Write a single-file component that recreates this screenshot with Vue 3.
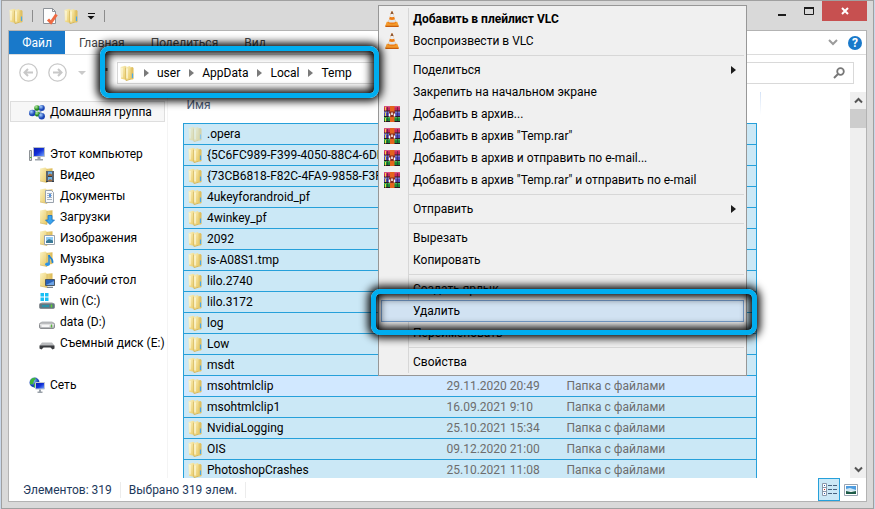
<script setup>
const tabs = ['Главная', 'Поделиться', 'Вид']
const crumbs = ['user', 'AppData', 'Local', 'Temp']

const places = [
  { name: 'Видео', icon: 'video' },
  { name: 'Документы', icon: 'docs' },
  { name: 'Загрузки', icon: 'downloads' },
  { name: 'Изображения', icon: 'pictures' },
  { name: 'Музыка', icon: 'music' },
  { name: 'Рабочий стол', icon: 'desktop' },
  { name: 'win (C:)', icon: 'drive-win' },
  { name: 'data (D:)', icon: 'drive' },
  { name: 'Съемный диск (E:)', icon: 'removable' },
]

const type = 'Папка с файлами'
const files = [
  { name: '.opera', hidden: true },
  { name: '{5C6FC989-F399-4050-88C4-6DB' },
  { name: '{73CB6818-F82C-4FA9-9858-F3F2' },
  { name: '4ukeyforandroid_pf' },
  { name: '4winkey_pf' },
  { name: '2092' },
  { name: 'is-A08S1.tmp' },
  { name: 'lilo.2740' },
  { name: 'lilo.3172' },
  { name: 'log' },
  { name: 'Low' },
  { name: 'msdt' },
  { name: 'msohtmlclip', date: '29.11.2020 20:49', type, focused: true },
  { name: 'msohtmlclip1', date: '16.09.2021 9:10', type },
  { name: 'NvidiaLogging', date: '25.10.2021 15:34', type },
  { name: 'OIS', date: '09.12.2020 21:00', type },
  { name: 'PhotoshopCrashes', date: '25.10.2021 11:08', type },
]

const menuGroups = [
  [
    { label: 'Добавить в плейлист VLC', icon: 'vlc', bold: true },
    { label: 'Воспроизвести в VLC', icon: 'vlc' },
  ],
  [
    { label: 'Поделиться', sub: true },
    { label: 'Закрепить на начальном экране' },
    { label: 'Добавить в архив...', icon: 'rar' },
    { label: 'Добавить в архив "Temp.rar"', icon: 'rar' },
    { label: 'Добавить в архив и отправить по e-mail...', icon: 'rar' },
    { label: 'Добавить в архив "Temp.rar" и отправить по e-mail', icon: 'rar' },
  ],
  [{ label: 'Отправить', sub: true }],
  [{ label: 'Вырезать' }, { label: 'Копировать' }],
  [{ label: 'Создать ярлык' }, { label: 'Удалить', active: true }, { label: 'Переименовать' }],
  [{ label: 'Свойства' }],
]
</script>

<template>
  <svg class="defs" aria-hidden="true">
    <defs>
      <linearGradient id="gold" x1="0" x2="1" y1="0" y2="1">
        <stop offset="0" stop-color="#fbf3c4" />
        <stop offset="1" stop-color="#e8c862" />
      </linearGradient>
      <linearGradient id="goldDark" x1="0" x2="1">
        <stop offset="0" stop-color="#f3e39a" />
        <stop offset="1" stop-color="#dcb956" />
      </linearGradient>
      <linearGradient id="steel" x1="0" x2="0" y1="0" y2="1">
        <stop offset="0" stop-color="#f4f4f4" />
        <stop offset="1" stop-color="#a8abae" />
      </linearGradient>
      <radialGradient id="ballBlue" cx=".35" cy=".3">
        <stop offset="0" stop-color="#a9d3ff" />
        <stop offset="1" stop-color="#1b46b5" />
      </radialGradient>
      <radialGradient id="ballGreen" cx=".35" cy=".3">
        <stop offset="0" stop-color="#b7f0a0" />
        <stop offset="1" stop-color="#22861f" />
      </radialGradient>
      <linearGradient id="screen" x1="0" x2="1" y1="0" y2="1">
        <stop offset="0" stop-color="#0a1bb0" />
        <stop offset=".5" stop-color="#1130d8" />
        <stop offset="1" stop-color="#7fb0ff" />
      </linearGradient>

      <symbol id="folder" viewBox="0 0 16 16">
        <path d="M8 3l5.500-1 1 1v11l-1 .6L8 15z" fill="url(#goldDark)" />
        <path d="M1.500 2L6 .8l1.500.7V15L2 13.800z" fill="url(#gold)" />
        <path d="M6.500 2.600L10.500 1l1 .7v12.500L7 15.800z" fill="url(#gold)" />
        <path d="M6.500 2.600L7 15.800l4.500-1.600" fill="none" stroke="#c9a748" stroke-width=".6" />
        <path d="M8 3.500v10" stroke="#fffbe0" stroke-width="1.200" />
        <path d="M3 3v9.500" stroke="#fffce8" stroke-width="1" />
        <path d="M13.500 8.500v4.500" stroke="#4aa8e8" stroke-width="1.200" />
      </symbol>

      <symbol id="folder-back" viewBox="0 0 16 16">
        <path d="M5 2l8.500-.8V13L5 14z" fill="url(#goldDark)" />
        <path d="M1 1.500L6.500.5 8 2v13.500L1 14z" fill="url(#gold)" />
        <path d="M8 2v13.500L1 14" fill="none" stroke="#cfae55" stroke-width=".6" />
      </symbol>
      <symbol id="video" viewBox="0 0 16 16">
        <use href="#folder-back" />
        <path d="M7 4h8v11H7z" fill="#333b44" />
        <path d="M9 4.500h4v4.500H9zM9 10h4v4.500H9z" fill="#6fb2e6" />
        <path d="M9 8l2-1.500 2 1V9H9zM9 13.500l2-1.500 2 1v1.500H9z" fill="#a26a3a" />
        <path d="M8 4.500v10M14 4.500v10" stroke="#d8dde2" stroke-dasharray="1 1" />
      </symbol>
      <symbol id="docs" viewBox="0 0 16 16">
        <use href="#folder-back" />
        <path d="M6.500 2.500h6l2 2v10h-8z" fill="#f7f9fb" stroke="#9aa3ad" />
        <path d="M8 5.500h5M8 7.500h5M8 9.500h5M8 11.500h5" stroke="#a9b4c2" />
        <path d="M10 6h2v3h-2z" fill="#5794dd" />
      </symbol>
      <symbol id="downloads" viewBox="0 0 16 16">
        <use href="#folder-back" />
        <path d="M9 6.500h4V11h2.500L11 15.500 6.500 11H9z" fill="#39a4ee" stroke="#1c72c0" stroke-width=".8" />
      </symbol>
      <symbol id="pictures" viewBox="0 0 16 16">
        <use href="#folder-back" />
        <path d="M5.500 5.500h10v9h-10z" fill="#fff" stroke="#9aa3ad" />
        <path d="M7 7h7v3.500H7z" fill="#8ecbf5" />
        <path d="M7 11l3-2 4 1.500V13H7z" fill="#3a7a98" />
      </symbol>
      <symbol id="music" viewBox="0 0 16 16">
        <use href="#folder-back" />
        <path d="M10 4c0 3 4.500 3 3.500 8" fill="none" stroke="#1f83d6" stroke-width="1.600" />
        <path d="M10 4v9" stroke="#1f83d6" stroke-width="1.400" />
        <ellipse cx="8.500" cy="13.300" rx="2.400" ry="1.800" fill="#2b93e6" />
      </symbol>
      <symbol id="desktop" viewBox="0 0 16 16">
        <use href="#folder-back" />
        <path d="M6.500 7.500h9v6h-9z" fill="#2a62b8" stroke="#4a5866" />
        <path d="M7 13l8-4v4z" fill="#6fa5e6" />
        <path d="M8 15.300h6" stroke="#5d6a76" />
      </symbol>
      <symbol id="drive-win" viewBox="0 0 16 16">
        <path d="M1.500 0h3.500v3.500H1.500zM6 0h3.500v3.500H6zM1.500 4.500h3.500V8H1.500zM6 4.500h3.500V8H6z" fill="#18c0f5" />
        <path d="M3 9h10l2.500 2H.5z" fill="#c9cccf" />
        <rect x=".5" y="10.500" width="15" height="5" rx="1.200" fill="#5f7884" stroke="#8a8f94" />
        <path d="M3 13h7" stroke="#2b91a8" stroke-width="2" />
        <path d="M12.500 11.500v3" stroke="#62d42c" stroke-width="1.400" />
      </symbol>
      <symbol id="drive" viewBox="0 0 16 16">
        <path d="M3 7h10l2.500 3H.5z" fill="#dcdee0" />
        <rect x=".5" y="9" width="15" height="5.500" rx="1.400" fill="url(#steel)" stroke="#8a8c8f" />
        <path d="M2.500 12h8" stroke="#f6f6f6" stroke-width="2" />
        <path d="M12.500 10.500v3" stroke="#58b83a" stroke-width="1.200" />
      </symbol>
      <symbol id="removable" viewBox="0 0 16 16">
        <path d="M3 7.500h10l2.500 3H.5z" fill="#b9bbbd" />
        <path d="M.5 10.500h15v3l-2 1-2-2h-7l-2 2-2-1z" fill="#3a3c3f" />
        <path d="M1 10.500h14" stroke="#77797c" />
      </symbol>

      <symbol id="homegroup" viewBox="0 0 16 16">
        <path d="M4 8l7-4 1 8z" fill="none" stroke="#8fa6c8" stroke-width="2" />
        <circle cx="8" cy="4" r="2.800" fill="url(#ballGreen)" />
        <circle cx="12.800" cy="4" r="3" fill="url(#ballBlue)" />
        <circle cx="3.300" cy="9" r="3.300" fill="url(#ballBlue)" />
        <circle cx="8.500" cy="10" r="2.600" fill="url(#ballGreen)" />
        <circle cx="12.700" cy="12.300" r="3.200" fill="url(#ballBlue)" />
      </symbol>
      <symbol id="computer" viewBox="0 0 16 16">
        <path d="M.5 4.500h2v10h-2z" fill="#d7dadd" stroke="#8d9296" />
        <path d="M1 11.500h1.500" stroke="#46b82b" />
        <path d="M4.500 1.500h11v9h-11z" fill="url(#screen)" stroke="#b8bec6" />
        <path d="M8.500 11h3v2h2.500v1.500H6V13h2.500z" fill="#9aa1a9" />
      </symbol>
      <symbol id="network" viewBox="0 0 16 16">
        <circle cx="5.500" cy="5.500" r="5" fill="url(#ballBlue)" />
        <path d="M1 4c1-3 4-3.500 6-3l-2 3-1 3-3 .5zM5 7l3-2v5l-3 .5z" fill="#3fb53a" />
        <path d="M6.500 5.500h9v6.500h-9z" fill="url(#screen)" stroke="#c3c9d2" />
        <path d="M10 12.500h2v2h1.500V16H8.500v-1.500H10z" fill="#9aa1a9" />
      </symbol>

      <symbol id="vlc" viewBox="0 0 16 16">
        <path d="M2.800 10.800h10.400l1.600 4.200c0 .7-.6.9-1.300.9h-11c-.7 0-1.300-.2-1.300-.9z" fill="#f39a2c" />
        <path d="M1.200 14.700h13.600l-.5 1.200H1.700z" fill="#c85c0c" />
        <path d="M7.300.4h1.400L12 12c-2 1.500-6 1.500-8 0z" fill="#ef7d14" />
        <path d="M6.600 3h2.800l.8 2.700c-1.200.6-3.200.6-4.400 0z" fill="#eceff1" />
        <path d="M5 8.200c1.800.9 4.200.9 6 0l.8 2.500c-2 1.200-5.600 1.200-7.600 0z" fill="#dfe3e6" />
        <path d="M7.300.4h1.400l.7 2.600H6.600z" fill="#8c5a3a" />
      </symbol>
      <symbol id="rar" viewBox="0 0 16 16">
        <path d="M0 0h16v5H0z" fill="#c4265c" />
        <path d="M0 5.500h16v5H0z" fill="#4a48b4" />
        <path d="M0 11h16v5H0z" fill="#168a34" />
        <path d="M0 .8h16" stroke="#e4668c" />
        <path d="M0 6.300h16" stroke="#7c7ad6" />
        <path d="M0 11.700h16" stroke="#50bb5a" />
        <path d="M0 5h16M0 10.500h16M0 15.500h16" stroke="#2a1820" />
        <path d="M1.500 1v3.500M1.500 6.500V10M1.500 12v3.500" stroke="#f0d840" />
        <path d="M3.500 1v14M13.500 1v14" stroke="#2b1a3a" stroke-opacity=".5" />
        <path d="M6 0h4.500v16H6z" fill="#e4641c" />
        <path d="M5 5.500h6V11H5z" fill="#8a2a1c" />
        <path d="M5.500 10.500v-3M8 9V6.500M10.500 10.500v-3" stroke="#fff" stroke-width="1.500" />
      </symbol>
      <symbol id="properties" viewBox="0 0 16 18">
        <path d="M1.500 1.500h9l3 3v12h-12z" fill="#fdfdfd" stroke="#8e9399" />
        <path d="M10.500 1.500v3h3" fill="none" stroke="#8e9399" />
        <path d="M6 12.500l3 3 5.500-8" fill="none" stroke="#ee6a42" stroke-width="3" />
      </symbol>
    </defs>
  </svg>

  <div class="window">
    <header class="titlebar">
      <svg class="ico"><use href="#folder" /></svg>
      <i class="bar"></i>
      <button class="quick" aria-label="Свойства"><svg class="tall"><use href="#properties" /></svg></button>
      <button class="quick" aria-label="Новая папка"><svg class="ico"><use href="#folder" /></svg></button>
      <button class="quick more" aria-label="Настройка панели">
        <svg width="8" height="8" viewBox="0 0 8 8"><path d="M1 1.500h7" stroke="#111" /><path d="M.5 4h7L4 7.500z" fill="#111" /></svg>
      </button>
      <i class="bar"></i>
      <div class="controls">
        <button aria-label="Свернуть"><svg width="10" height="10"><path d="M1 9h8" stroke="#1c1c1c" stroke-width="2" /></svg></button>
        <button aria-label="Развернуть"><svg width="10" height="10"><path d="M.5 2.500h9v6h-9z" fill="none" stroke="#1c1c1c" /><path d="M0 2h10" stroke="#1c1c1c" stroke-width="2" /></svg></button>
        <button class="close" aria-label="Закрыть"><svg width="8" height="8"><path d="M1 1l6 6M7 1L1 7" stroke="#fff" stroke-width="2" /></svg></button>
      </div>
    </header>

    <div class="client">
      <nav class="tabs">
        <button class="file">Файл</button>
        <button v-for="t in tabs" :key="t" class="tab">{{ t }}</button>
        <button class="expand" aria-label="Развернуть ленту"><svg width="10" height="7"><path d="M1 1l4 4 4-4" fill="none" stroke="#9b9b9b" stroke-width="2" /></svg></button>
        <button class="help" aria-label="Справка">?</button>
      </nav>

      <div class="navbar">
        <button class="round" aria-label="Назад"><svg width="19" height="19"><circle cx="9.500" cy="9.500" r="8.700" fill="none" stroke="#c8c8c8" stroke-width="1.300" /><path d="M14 9.500H6M9 6L5.500 9.500 9 13" fill="none" stroke="#c8c8c8" stroke-width="2" /></svg></button>
        <button class="round" aria-label="Вперед"><svg width="19" height="19"><circle cx="9.500" cy="9.500" r="8.700" fill="none" stroke="#c8c8c8" stroke-width="1.300" /><path d="M5 9.500h8M10 6l3.500 3.500L10 13" fill="none" stroke="#c8c8c8" stroke-width="2" /></svg></button>
        <button class="recent" aria-label="Последние"><svg width="8" height="4"><path d="M0 0h8L4 4z" fill="#cacaca" /></svg></button>
        <button class="up" aria-label="Вверх"><svg width="11" height="11"><path d="M4.500 1v3" stroke="#555" stroke-width="2" /></svg></button>
        <div class="address">
          <svg class="ico"><use href="#folder" /></svg>
          <template v-for="c in crumbs" :key="c">
            <svg class="chev" width="5" height="8"><path d="M0 0l5 4-5 4z" fill="#7a7a7a" /></svg>
            <a href="#">{{ c }}</a>
          </template>
        </div>
        <div class="search">
          <input type="text" aria-label="Поиск" />
          <svg width="12" height="12"><circle cx="7.500" cy="4.500" r="3.300" fill="none" stroke="#777" stroke-width="1.800" /><path d="M5 7L1 11" stroke="#777" stroke-width="2" /></svg>
        </div>
      </div>

      <div class="body">
        <aside class="tree">
          <a href="#" class="node root hot"><svg class="ico"><use href="#homegroup" /></svg>Домашняя группа</a>
          <a href="#" class="node root gap"><svg class="ico"><use href="#computer" /></svg>Этот компьютер</a>
          <a v-for="p in places" :key="p.name" href="#" class="node child"><svg class="ico"><use :href="'#' + p.icon" /></svg>{{ p.name }}</a>
          <a href="#" class="node root gap"><svg class="ico"><use href="#network" /></svg>Сеть</a>
        </aside>

        <main class="list">
          <table>
            <colgroup><col class="c-name" /><col class="c-date" /><col /></colgroup>
            <thead><tr><th>Имя</th><th></th><th></th></tr></thead>
            <tbody>
              <tr v-for="f in files" :key="f.name" :class="{ focused: f.focused, dim: f.hidden }">
                <td><span class="cell"><svg class="ico"><use href="#folder" /></svg>{{ f.name }}</span></td>
                <td>{{ f.date }}</td>
                <td>{{ f.type }}</td>
              </tr>
            </tbody>
          </table>
          <i class="colend"></i>
        </main>

        <div class="scroll">
          <button aria-label="Прокрутить вверх"><svg width="9" height="7"><path d="M1 5.500l3.500-3.500L8 5.500" fill="none" stroke="#555" stroke-width="2" /></svg></button>
          <div class="thumb"></div>
          <button class="down" aria-label="Прокрутить вниз"><svg width="9" height="7"><path d="M1 1.500l3.500 3.500L8 1.500" fill="none" stroke="#555" stroke-width="2" /></svg></button>
        </div>
      </div>

      <footer class="status">
        <span>Элементов: 319</span>
        <span>Выбрано 319 элем.</span>
        <div class="views">
          <button class="on" aria-label="Таблица">
            <svg width="15" height="13"><path d="M.5 0.500h4v12h-4zM.5 4.500h4M.5 8.500h4" fill="#fff" stroke="#8a97a8" /><path d="M2 2h1v1H2zM2 10h1v1H2z" fill="#2a5fb8" /><path d="M2 6h1v1H2z" fill="#c22" /><path d="M6 2.500h4M11 2.500h4M6 6.500h4M11 6.500h4M6 10.500h4M11 10.500h4" stroke="#46617e" /></svg>
          </button>
          <button aria-label="Эскизы">
            <svg width="14" height="12"><path d="M.5.5h13v11H.5z" fill="#fff" stroke="#9aa5b2" /><path d="M2 2h10v4H2z" fill="#4f9de0" /><path d="M2 5l4-1 6 2v1H2z" fill="#cfe8f5" /><path d="M2 7l5 1 5-1v3H2z" fill="#1d5b48" /></svg>
          </button>
        </div>
      </footer>
    </div>

    <div class="menu" role="menu">
      <div v-for="(g, i) in menuGroups" :key="i" class="group">
        <button v-for="m in g" :key="m.label" role="menuitem" class="item" :class="{ bold: m.bold, active: m.active }">
          <span class="slot"><svg v-if="m.icon" class="ico"><use :href="'#' + m.icon" /></svg></span>
          <span>{{ m.label }}</span>
          <svg v-if="m.sub" class="arrow" width="5" height="8"><path d="M0 0l5 4-5 4z" fill="#1c1c1c" /></svg>
          <i v-if="m.active" class="ring ring-item"></i>
        </button>
      </div>
    </div>
    <i class="ring ring-address"></i>
  </div>
</template>

<style>
body {
  margin: 0;
  background: #c9d8ea;
}
</style>

<style scoped>
* {
  box-sizing: border-box;
}
.defs {
  position: absolute;
  width: 0;
  height: 0;
}
button {
  padding: 0;
  border: 0;
  background: none;
  font: inherit;
  color: inherit;
}
a {
  color: inherit;
  text-decoration: none;
}
svg {
  display: block;
  flex: none;
}
.ico {
  width: 16px;
  height: 16px;
}
.window {
  position: relative;
  display: flex;
  flex-direction: column;
  height: 100vh;
  margin: 0 1px;
  padding: 0 6px 6px;
  border: 1px solid #a0a0a0;
  background: #d9d9d9;
  font: 12px/16px Roboto, "Open Sans", sans-serif;
  color: #000;
  overflow: hidden;
}
.titlebar {
  display: flex;
  align-items: center;
  height: 29px;
  flex: none;
  gap: 8px;
}
.bar {
  width: 1px;
  height: 12px;
  background: #8c8c8c;
}
.tall {
  width: 16px;
  height: 18px;
}
.quick {
  margin-left: 2px;
}
.quick:first-of-type {
  margin-left: 1px;
}
.quick + .quick {
  margin-left: -3px;
}
.quick + .more {
  margin-left: 0;
}
.more + .bar {
  margin-left: 1px;
}
.controls {
  display: flex;
  align-self: flex-start;
  margin-left: auto;
}
.controls button {
  display: flex;
  align-items: center;
  justify-content: center;
  width: 27px;
  height: 20px;
}
.controls .close {
  width: 45px;
  background: #c75050;
}
.client {
  display: flex;
  flex-direction: column;
  flex: 1;
  min-height: 0;
  border: 1px solid #b3b3b3;
  background: #fff;
}
.tabs {
  display: flex;
  align-items: center;
  flex: none;
  height: 24px;
  border-bottom: 1px solid #dcdcdc;
  color: #444;
}
.file {
  width: 56px;
  align-self: stretch;
  background: #1979ca;
  color: #fff;
}
.tab {
  margin-left: 14px;
  margin-right: 12px;
}
.expand {
  margin-left: auto;
}
.help {
  width: 14px;
  height: 14px;
  margin: 0 4px 0 10px;
  border-radius: 50%;
  background: #1979ca;
  color: #fff;
  font-weight: 700;
  line-height: 14px;
}
.navbar {
  display: flex;
  align-items: center;
  flex: none;
  height: 37px;
  padding: 0 12px 2px 10px;
}
.round + .round {
  margin-left: 10px;
}
.recent {
  margin-left: 11px;
}
.up {
  margin: 0 4px 0 16px;
}
.address,
.search {
  display: flex;
  align-items: center;
  height: 22px;
  border: 1px solid #d9d9d9;
}
.address {
  flex: 3;
  padding-left: 1px;
}
.address a {
  margin: 0 0 0 8px;
}
.chev {
  margin-left: 9px;
}
.search {
  flex: 1;
  margin-left: 8px;
  padding-right: 8px;
}
.search input {
  flex: 1;
  min-width: 0;
  border: 0;
  outline: 0;
  background: none;
  font: inherit;
}
.body {
  display: flex;
  flex: 1;
  min-height: 0;
}
.tree {
  flex: none;
  width: 159px;
  padding: 9px 2px 0 1px;
  border-right: 1px solid #f4f4f4;
}
.node {
  display: flex;
  align-items: center;
  height: 21px;
  gap: 5px;
  border: 1px solid transparent;
  white-space: nowrap;
}
.root {
  padding-left: 18px;
}
.child {
  padding-left: 28px;
}
.hot {
  border-color: #dedede;
  background: #f7f7f7;
}
.gap {
  margin-top: 21px;
}
.list {
  display: flex;
  flex: 1;
  min-width: 0;
  padding-left: 15px;
  overflow: hidden;
}
table {
  width: calc(100% - 93px);
  height: max-content;
  border-collapse: collapse;
  table-layout: fixed;
}
.c-name {
  width: 258px;
}
.c-date {
  width: 120px;
}
th {
  height: 31px;
  padding: 0 3px 4px;
  font-weight: 400;
  text-align: left;
  color: #4c607a;
}
tbody tr {
  height: 21px;
  border: 1px solid #26a0da;
  background: #cbe8f6;
}
tbody .focused {
  background: #d1e8ff;
}
td {
  padding: 0 5px;
  color: #6d6d6d;
  white-space: nowrap;
  line-height: 16px;
}
td:first-child {
  padding-left: 3px;
  color: #000;
}
.cell {
  display: flex;
  align-items: center;
  gap: 4px;
}
.dim .ico {
  opacity: 0.5;
}
.colend {
  width: 1px;
  height: 23px;
  margin-left: 3px;
  background: linear-gradient(#d5e3f7, #fff);
}
.scroll {
  display: flex;
  flex-direction: column;
  flex: none;
  width: 16px;
  background: #efefef;
}
.scroll button {
  display: flex;
  align-items: center;
  justify-content: center;
  height: 17px;
}
.thumb {
  height: 19px;
  background: #cdcdcd;
}
.scroll .down {
  margin-top: auto;
}
.status {
  display: flex;
  align-items: center;
  flex: none;
  height: 23px;
  padding-left: 14px;
  color: #1e395b;
}
.status span {
  padding-right: 8px;
  margin-right: 8px;
  border-right: 1px solid #ececec;
}
.views {
  display: flex;
  margin-left: auto;
  padding-right: 4px;
}
.views button {
  display: flex;
  align-items: center;
  justify-content: center;
  width: 22px;
  height: 23px;
}
.views .on {
  border: 1px solid #26a0da;
  background: #cbe8f6;
}
.menu {
  position: absolute;
  z-index: 1;
  top: 4px;
  left: 376px;
  width: 369px;
  padding: 2px;
  border: 1px solid #979797;
  background: linear-gradient(#d7d7d7, #d7d7d7) 29px 2px / 1px calc(100% - 4px) no-repeat #f0f0f0;
}
.group + .group::before {
  content: "";
  display: block;
  height: 7px;
  margin-left: 27px;
  background: linear-gradient(#d7d7d7, #d7d7d7) 0 3px / 100% 1px no-repeat;
}
.item {
  position: relative;
  display: flex;
  align-items: center;
  width: 100%;
  height: 22px;
  padding-right: 7px;
  border: 1px solid transparent;
  text-align: left;
  white-space: nowrap;
}
.slot {
  width: 31px;
  padding-left: 2px;
}
.bold {
  font-weight: 700;
}
.active {
  z-index: 1;
  border-color: #78a0d0;
  background: #d1e2f2;
}
.arrow {
  margin-left: auto;
}
.ring {
  position: absolute;
  border: 5px solid #00adef;
  border-radius: 9px;
  box-shadow: 0 0 9px 3px #000, inset 0 0 9px 3px #000;
  pointer-events: none;
}
.ring-item {
  inset: -12px -14px -14px -11px;
}
.ring-address {
  z-index: 2;
  top: 45px;
  left: 98px;
  width: 279px;
  height: 52px;
}
</style>
